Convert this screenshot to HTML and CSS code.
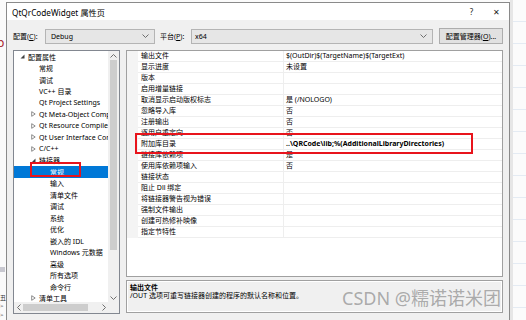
FILE: index.html
```html
<!DOCTYPE html>
<html lang="zh-CN">
<head>
  <meta charset="UTF-8">
  <title>QtQrCodeWidget 属性页</title>
  <link rel="stylesheet" href="styles.css">
</head>
<body>
  <div class="screen">
    <div class="edge-left">
      <span class="edge-p">p</span>
      <span class="edge-mark edge-mark-1"></span>
      <span class="edge-glyph edge-glyph-1">丑</span>
      <span class="edge-glyph edge-glyph-2">&gt;</span>
      <span class="edge-glyph edge-glyph-3">&gt;</span>
    </div>

    <div class="dialog">
      <div class="titlebar">
        <span class="title">QtQrCodeWidget 属性页</span>
        <span class="title-btn help">?</span>
        <span class="title-btn close">✕</span>
      </div>

      <div class="body">
        <div class="config-row">
          <span class="lbl lbl-config">配置(<u>C</u>):</span>
          <div class="combo combo-config">
            <span>Debug</span>
            <svg class="chev" width="7" height="4" viewBox="0 0 7 4"><polyline points="0.5,0.5 3.5,3.5 6.5,0.5" fill="none" stroke="#606060" stroke-width="0.9"/></svg>
          </div>
          <span class="lbl lbl-platform">平台(<u>P</u>):</span>
          <div class="combo combo-platform">
            <span>x64</span>
            <svg class="chev" width="7" height="4" viewBox="0 0 7 4"><polyline points="0.5,0.5 3.5,3.5 6.5,0.5" fill="none" stroke="#606060" stroke-width="0.9"/></svg>
          </div>
          <button class="btn">配置管理器(<u>O</u>)...</button>
        </div>

        <div class="main">
          <div class="tree">
            <div class="tree-list">
              <div class="node lvl0"><span class="exp"><svg width="5" height="5" viewBox="0 0 5 5"><polygon points="4.5,0.5 4.5,4.5 0.5,4.5" fill="#404040"/></svg></span>配置属性</div>
              <div class="node lvl1"><span class="exp"></span>常规</div>
              <div class="node lvl1"><span class="exp"></span>调试</div>
              <div class="node lvl1"><span class="exp"></span>VC++ 目录</div>
              <div class="node lvl1"><span class="exp"></span>Qt Project Settings</div>
              <div class="node lvl1"><span class="exp"><svg width="5" height="6" viewBox="0 0 5 6"><polygon points="0.7,0.7 4.2,3 0.7,5.3" fill="none" stroke="#707070" stroke-width="0.8"/></svg></span>Qt Meta-Object Compiler</div>
              <div class="node lvl1"><span class="exp"><svg width="5" height="6" viewBox="0 0 5 6"><polygon points="0.7,0.7 4.2,3 0.7,5.3" fill="none" stroke="#707070" stroke-width="0.8"/></svg></span>Qt Resource Compiler</div>
              <div class="node lvl1"><span class="exp"><svg width="5" height="6" viewBox="0 0 5 6"><polygon points="0.7,0.7 4.2,3 0.7,5.3" fill="none" stroke="#707070" stroke-width="0.8"/></svg></span>Qt User Interface Compiler</div>
              <div class="node lvl1"><span class="exp"><svg width="5" height="6" viewBox="0 0 5 6"><polygon points="0.7,0.7 4.2,3 0.7,5.3" fill="none" stroke="#707070" stroke-width="0.8"/></svg></span>C/C++</div>
              <div class="node lvl1"><span class="exp"><svg width="5" height="5" viewBox="0 0 5 5"><polygon points="4.5,0.5 4.5,4.5 0.5,4.5" fill="#404040"/></svg></span>链接器</div>
              <div class="node lvl2 selected"><span class="exp"></span>常规</div>
              <div class="node lvl2"><span class="exp"></span>输入</div>
              <div class="node lvl2"><span class="exp"></span>清单文件</div>
              <div class="node lvl2"><span class="exp"></span>调试</div>
              <div class="node lvl2"><span class="exp"></span>系统</div>
              <div class="node lvl2"><span class="exp"></span>优化</div>
              <div class="node lvl2"><span class="exp"></span>嵌入的 IDL</div>
              <div class="node lvl2"><span class="exp"></span>Windows 元数据</div>
              <div class="node lvl2"><span class="exp"></span>高级</div>
              <div class="node lvl2"><span class="exp"></span>所有选项</div>
              <div class="node lvl2"><span class="exp"></span>命令行</div>
              <div class="node lvl1"><span class="exp"><svg width="5" height="6" viewBox="0 0 5 6"><polygon points="0.7,0.7 4.2,3 0.7,5.3" fill="none" stroke="#707070" stroke-width="0.8"/></svg></span>清单工具</div>
            </div>

            <div class="vscroll">
              <div class="sb-arrow"><svg width="7" height="4" viewBox="0 0 7 4"><polyline points="0.5,3.5 3.5,0.5 6.5,3.5" fill="none" stroke="#606060" stroke-width="0.9"/></svg></div>
              <div class="sb-track"><div class="sb-thumb-v"></div></div>
              <div class="sb-arrow"><svg width="7" height="4" viewBox="0 0 7 4"><polyline points="0.5,0.5 3.5,3.5 6.5,0.5" fill="none" stroke="#606060" stroke-width="0.9"/></svg></div>
            </div>

            <div class="hscroll">
              <div class="sb-arrow"><svg width="4" height="7" viewBox="0 0 4 7"><polyline points="3.5,0.5 0.5,3.5 3.5,6.5" fill="none" stroke="#606060" stroke-width="0.9"/></svg></div>
              <div class="sb-track-h"><div class="sb-thumb-h"></div></div>
              <div class="sb-arrow"><svg width="4" height="7" viewBox="0 0 4 7"><polyline points="0.5,0.5 3.5,3.5 0.5,6.5" fill="none" stroke="#606060" stroke-width="0.9"/></svg></div>
            </div>
            <div class="sb-corner"></div>
          </div>

          <div class="right">
            <div class="grid">
              <div class="prop"><span class="pm"></span><span class="pn">输出文件</span><span class="pv">$(OutDir)$(TargetName)$(TargetExt)</span></div>
              <div class="prop"><span class="pm"></span><span class="pn">显示进度</span><span class="pv">未设置</span></div>
              <div class="prop"><span class="pm"></span><span class="pn">版本</span><span class="pv"></span></div>
              <div class="prop"><span class="pm"></span><span class="pn">启用增量链接</span><span class="pv"></span></div>
              <div class="prop"><span class="pm"></span><span class="pn">取消显示启动版权标志</span><span class="pv">是 (/NOLOGO)</span></div>
              <div class="prop"><span class="pm"></span><span class="pn">忽略导入库</span><span class="pv">否</span></div>
              <div class="prop"><span class="pm"></span><span class="pn">注册输出</span><span class="pv">否</span></div>
              <div class="prop"><span class="pm"></span><span class="pn">逐用户重定向</span><span class="pv">否</span></div>
              <div class="prop"><span class="pm"></span><span class="pn">附加库目录</span><span class="pv changed">..\QRCode\lib;%(AdditionalLibraryDirectories)</span></div>
              <div class="prop"><span class="pm"></span><span class="pn">链接库依赖项</span><span class="pv">是</span></div>
              <div class="prop"><span class="pm"></span><span class="pn">使用库依赖项输入</span><span class="pv">否</span></div>
              <div class="prop"><span class="pm"></span><span class="pn">链接状态</span><span class="pv"></span></div>
              <div class="prop"><span class="pm"></span><span class="pn">阻止 Dll 绑定</span><span class="pv"></span></div>
              <div class="prop"><span class="pm"></span><span class="pn">将链接器警告视为错误</span><span class="pv"></span></div>
              <div class="prop"><span class="pm"></span><span class="pn">强制文件输出</span><span class="pv"></span></div>
              <div class="prop"><span class="pm"></span><span class="pn">创建可热修补映像</span><span class="pv"></span></div>
              <div class="prop"><span class="pm"></span><span class="pn">指定节特性</span><span class="pv"></span></div>
            </div>

            <div class="desc">
              <div class="desc-title">输出文件</div>
              <div class="desc-text">/OUT 选项可重写链接器创建的程序的默认名称和位置。</div>
            </div>
          </div>
        </div>
      </div>
    </div>

    <div class="edge-right"></div>

    <!-- annotations drawn over the screenshot -->
    <div class="mark mark-tree"></div>
    <div class="mark mark-grid"></div>
    <div class="watermark">CSDN @糯诺诺米团</div>
  </div>
</body>
</html>
```

FILE: styles.css
```css
* {
  box-sizing: border-box;
}

body {
  margin: 0;
  font-family: "Noto Sans", "Noto Sans CJK SC", sans-serif;
  font-size: 7px;
  color: #000;
  background: #fff;
}

.screen {
  position: relative;
  width: 526px;
  height: 320px;
  overflow: hidden;
  display: flex;
  background: #fbfbfb;
}

/* strips of the window behind the dialog */
.edge-left {
  position: relative;
  width: 6px;
  flex: none;
  background: #fafafa;
}
.edge-p {
  position: absolute;
  left: -3px;
  top: 34px;
  font-size: 12px;
  color: #a8222c;
}
.edge-mark {
  position: absolute;
  left: 0;
  width: 5px;
  background: #c8c8d0;
}
.edge-mark-1 {
  top: 267px;
  height: 5px;
}
.edge-glyph {
  position: absolute;
  left: 0;
  font-size: 6px;
  color: #333;
}
.edge-glyph-1 { top: 293px; }
.edge-glyph-2 { top: 302px; }
.edge-glyph-3 { top: 311px; }

.edge-right {
  flex: 1;
  border-left: 3px solid #e6e6e6;
  background: repeating-linear-gradient(to bottom, #fbfbfb 0 21px, #e4ebf3 21px 22px);
}

/* dialog */
.dialog {
  width: 504px;
  height: 340px;
  flex: none;
  margin-top: 2px;
  border: 1px solid #8a8a8a;
  background: #f0f0f0;
  display: flex;
  flex-direction: column;
}

.titlebar {
  height: 17px;
  background: #fff;
  display: flex;
  align-items: center;
  padding-left: 5px;
  flex: none;
}
.title {
  flex: 1;
  font-size: 8.2px;
}
.title-btn {
  width: 25px;
  text-align: center;
  font-size: 8px;
  color: #222;
}

.body {
  padding: 8px 6px 0 6px;
}

.config-row {
  display: flex;
  align-items: center;
  height: 16px;
}
.lbl {
  white-space: nowrap;
}
.lbl u {
  text-decoration: underline;
}
.lbl-config {
  width: 32px;
}
.lbl-platform {
  width: 31px;
  margin-left: 5px;
}
.combo {
  height: 15px;
  display: flex;
  align-items: center;
  justify-content: space-between;
  padding: 0 5px 0 5px;
  background: #e6e6e6;
  border: 1px solid #b4b4b4;
}
.combo-config {
  width: 110px;
}
.combo-platform {
  width: 242px;
  padding-left: 3px;
}
.btn {
  margin-left: 6px;
  width: 64px;
  height: 16px;
  padding: 0;
  font: inherit;
  background: #e1e1e1;
  border: 1px solid #adadad;
  white-space: nowrap;
}

.main {
  display: flex;
  gap: 6px;
  margin-top: 6px;
}

/* tree */
.tree {
  width: 107px;
  height: 264px;
  flex: none;
  border: 1px solid #828790;
  background: #fff;
  display: grid;
  grid-template-columns: 1fr 11px;
  grid-template-rows: 1fr 11px;
}
.tree-list {
  overflow: hidden;
}
.node {
  display: flex;
  align-items: center;
  height: 11.5px;
  white-space: nowrap;
}
.node.lvl0 { padding-left: 5px; }
.node.lvl1 { padding-left: 16px; }
.node.lvl2 { padding-left: 27px; }
.node.selected {
  background: #0078d7;
  color: #fff;
}
.exp {
  width: 9px;
  flex: none;
  display: flex;
  align-items: center;
  padding-left: 1px;
}

.vscroll {
  display: flex;
  flex-direction: column;
  background: #f0f0f0;
}
.sb-arrow {
  flex: none;
  display: flex;
  align-items: center;
  justify-content: center;
  height: 9px;
}
.hscroll .sb-arrow {
  height: auto;
  width: 9px;
}
.sb-track {
  flex: 1;
  padding: 0 2px;
}
.sb-thumb-v {
  height: 190px;
  background: #cdcdcd;
}
.hscroll {
  display: flex;
  background: #f0f0f0;
}
.sb-track-h {
  flex: 1;
  padding: 2px 0;
}
.sb-thumb-h {
  width: 65px;
  height: 100%;
  background: #cdcdcd;
}
.sb-corner {
  background: #f0f0f0;
}

/* property grid */
.right {
  flex: 1;
  display: flex;
  flex-direction: column;
  gap: 3px;
}
.grid {
  height: 227px;
  border: 1px solid #a0a0a0;
  background: #fff;
}
.prop {
  display: grid;
  grid-template-columns: 11px 146px 1fr;
  height: 11px;
}
.pm {
  background: #f4f4f4;
}
.pn,
.pv {
  line-height: 10px;
  border-bottom: 1px solid #eeeeee;
  white-space: nowrap;
  overflow: hidden;
}
.pn {
  padding-left: 3px;
  border-right: 1px solid #eeeeee;
}
.pv {
  padding-left: 2px;
}
.pv.changed {
  font-weight: 700;
}

.desc {
  height: 33px;
  border: 1px solid #a0a0a0;
  box-shadow: inset 0 0 0 1px #fff;
  padding: 3px 3px;
  line-height: 8px;
}
.desc-title {
  font-weight: 700;
}

/* annotations */
.mark {
  position: absolute;
  border: 2px solid #e8141c;
}
.mark-tree {
  left: 30px;
  top: 162px;
  width: 51px;
  height: 15px;
}
.mark-grid {
  left: 135px;
  top: 133px;
  width: 338px;
  height: 21px;
}
.watermark {
  position: absolute;
  left: 342px;
  top: 288px;
  font-size: 18px;
  line-height: 20px;
  color: rgba(130, 130, 130, 0.65);
  white-space: nowrap;
}
```
